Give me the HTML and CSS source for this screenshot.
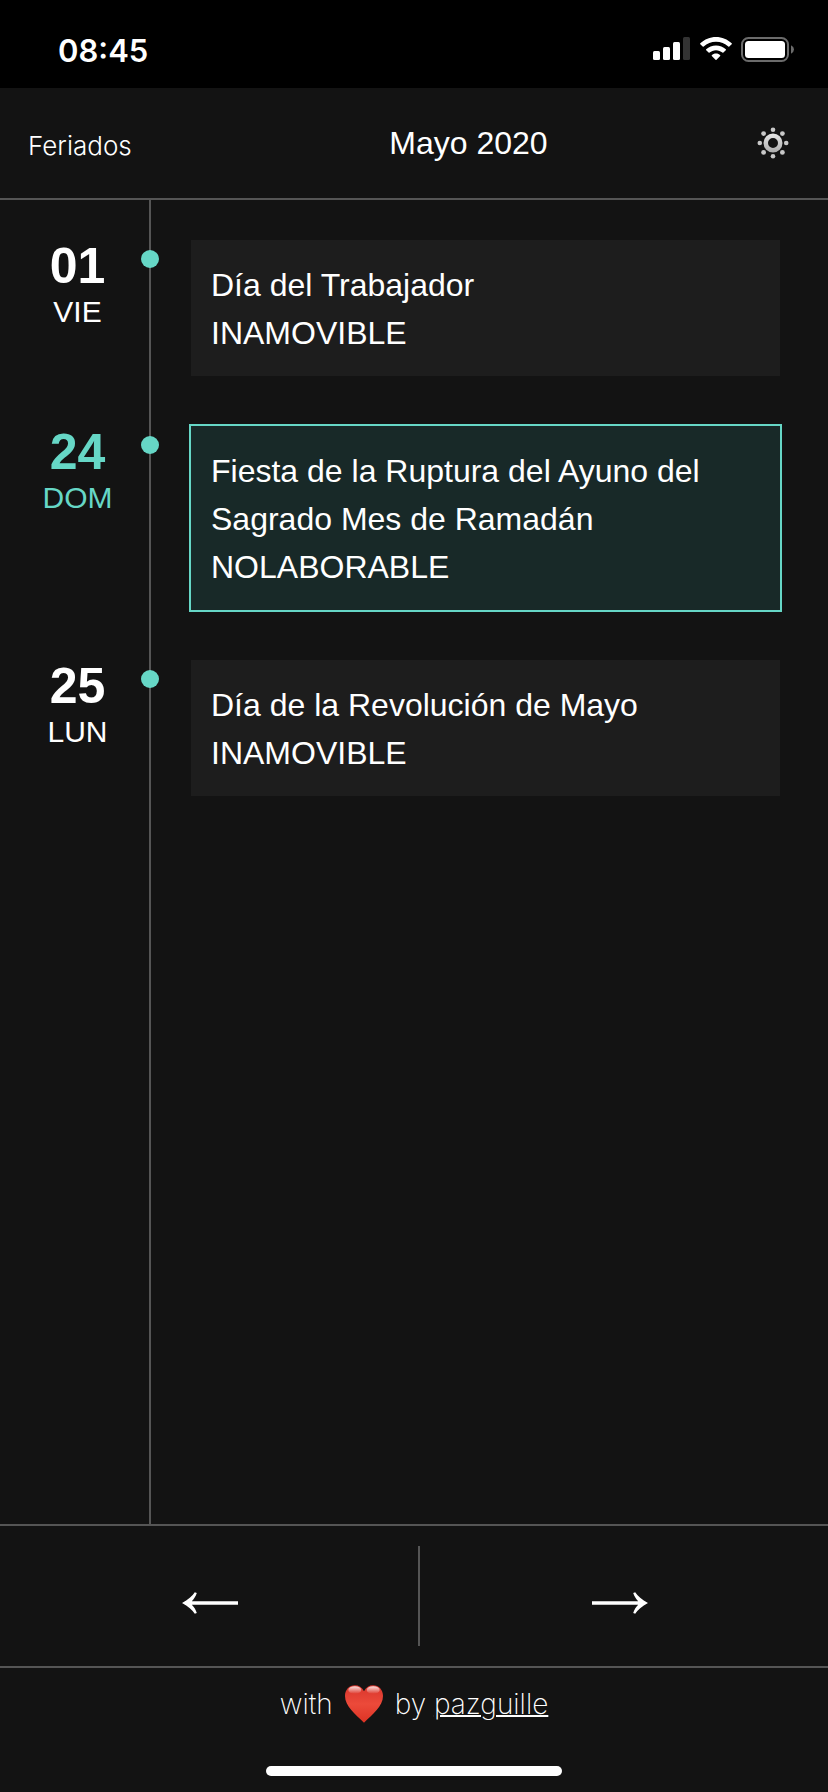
FILE: index.html
```html
<!DOCTYPE html>
<html lang="es">
<head>
<meta charset="utf-8">
<meta name="viewport" content="width=device-width, initial-scale=1">
<title>Feriados</title>
<link rel="stylesheet" href="styles.css">
</head>
<body>
<div class="app">
  <div class="status">
    <time class="status-time">08:45</time>
    <div class="status-icons">
      <svg width="38" height="24" viewBox="0 0 38 24" fill="#fff" aria-hidden="true">
        <rect x="0" y="14" width="7" height="9" rx="1.5"/>
        <rect x="10" y="10" width="7" height="13" rx="1.5"/>
        <rect x="20" y="5" width="7" height="18" rx="1.5"/>
        <rect x="30" y="0" width="7" height="23" rx="1.5" fill="#333"/>
      </svg>
      <svg width="32" height="24" viewBox="0 0 32 24" fill="#fff" aria-hidden="true">
        <path d="M16 0C22 0 27.500 2.300 31.700 6.300Q32.100 6.800 31.700 7.200L29.300 9.600Q28.800 10 28.300 9.600C25 6.600 20.700 4.800 16 4.800S7 6.600 3.700 9.600Q3.200 10 2.700 9.600L.3 7.200Q-.1 6.800 .3 6.300C4.500 2.300 10 0 16 0Z"/>
        <path d="M16 8.400C19.800 8.400 23.200 9.800 25.800 12.200Q26.300 12.700 25.800 13.200L23.400 15.600Q22.900 16 22.400 15.600C20.700 14.100 18.500 13.200 16 13.200S11.300 14.100 9.600 15.600Q9.100 16 8.600 15.600L6.200 13.200Q5.700 12.700 6.200 12.200C8.800 9.800 12.200 8.400 16 8.400Z"/>
        <path d="M16 16.600C17.700 16.600 19.200 17.200 20.200 18.200Q20.600 18.600 20.200 19.100L16.500 22.800Q16 23.200 15.500 22.800L11.800 19.100Q11.400 18.600 11.800 18.200C12.800 17.200 14.300 16.600 16 16.600Z"/>
      </svg>
      <svg width="54" height="26" viewBox="0 0 54 26" aria-hidden="true">
        <rect x="1" y="1" width="46" height="23" rx="6.500" fill="none" stroke="#6b6b6b" stroke-width="2"/>
        <rect x="4" y="4" width="40" height="17" rx="3.500" fill="#fff"/>
        <path d="M50 8.300Q53 9.800 53 12.500T50 16.700Z" fill="#6b6b6b"/>
      </svg>
    </div>
  </div>

  <header class="header">
    <span class="brand">Feriados</span>
    <h1 class="month">Mayo 2020</h1>
    <button class="theme" type="button" aria-label="Cambiar tema">
      <svg width="32" height="32" viewBox="0 0 32 32" aria-hidden="true">
        <defs>
          <linearGradient id="ring" x1="0" y1="0" x2="0" y2="1">
            <stop offset="0" stop-color="#e6e6e6"/>
            <stop offset="1" stop-color="#acacac"/>
          </linearGradient>
        </defs>
        <path fill="url(#ring)" fill-rule="evenodd" d="M16 6.500a9.500 9.500 0 1 1 0 19a9.500 9.500 0 0 1 0-19ZM16 11a5 5 0 1 0 0 10a5 5 0 0 0 0-10Z"/>
        <g fill="#c8c8c8">
          <circle cx="16" cy="2.800" r="2.300"/>
          <circle cx="25.400" cy="6.600" r="2.400"/>
          <circle cx="29.200" cy="16" r="2.300"/>
          <circle cx="25.400" cy="25.400" r="2.400"/>
          <circle cx="16" cy="29.200" r="2.300"/>
          <circle cx="6.600" cy="25.400" r="2.400"/>
          <circle cx="2.800" cy="16" r="2.300"/>
          <circle cx="6.600" cy="6.600" r="2.400"/>
        </g>
      </svg>
    </button>
  </header>

  <main class="timeline">
    <article class="holiday">
      <div class="date"><span class="day">01</span><span class="weekday">VIE</span></div>
      <span class="dot"></span>
      <div class="card"><p>Día del Trabajador</p><p>INAMOVIBLE</p></div>
    </article>
    <article class="holiday next">
      <div class="date"><span class="day">24</span><span class="weekday">DOM</span></div>
      <span class="dot"></span>
      <div class="card"><p>Fiesta de la Ruptura del Ayuno del Sagrado Mes de Ramadán</p><p>NOLABORABLE</p></div>
    </article>
    <article class="holiday">
      <div class="date"><span class="day">25</span><span class="weekday">LUN</span></div>
      <span class="dot"></span>
      <div class="card"><p>Día de la Revolución de Mayo</p><p>INAMOVIBLE</p></div>
    </article>
  </main>

  <nav class="pager">
    <button class="arrow" type="button" aria-label="Mes anterior">
      <svg width="56" height="24" viewBox="0 0 56 24" fill="#fff" aria-hidden="true">
        <path d="M0 12C6 8.800 10.500 5 12.800 1.200L14.800 2C13.600 5.300 12 8.200 9.800 10.200H56V13.800H9.800C12 15.800 13.600 18.700 14.800 22L12.800 22.800C10.500 19 6 15.200 0 12Z"/>
      </svg>
    </button>
    <span class="divider"></span>
    <button class="arrow" type="button" aria-label="Mes siguiente">
      <svg width="56" height="24" viewBox="0 0 56 24" fill="#fff" aria-hidden="true">
        <path d="M56 12C50 8.800 45.500 5 43.200 1.200L41.200 2C42.400 5.300 44 8.200 46.200 10.200H0V13.800H46.200C44 15.800 42.400 18.700 41.200 22L43.200 22.800C45.500 19 50 15.200 56 12Z"/>
      </svg>
    </button>
  </nav>

  <footer class="footer">
    <p class="credit">
      <span>with</span>
      <svg width="38" height="38" viewBox="0 0 38 38" role="img" aria-label="love">
        <defs>
          <linearGradient id="heart" x1="0" y1="0" x2="0" y2="1">
            <stop offset="0" stop-color="#d8352c"/>
            <stop offset=".5" stop-color="#ec4a3a"/>
            <stop offset="1" stop-color="#dd3324"/>
          </linearGradient>
          <linearGradient id="shine" x1="0" y1="0" x2="0" y2="1">
            <stop offset="0" stop-color="#fff" stop-opacity=".85"/>
            <stop offset="1" stop-color="#fff" stop-opacity="0"/>
          </linearGradient>
        </defs>
        <path fill="url(#heart)" d="M19 6.300C21.200 2.200 24.300 .3 28 .3C34 .3 38 4.900 38 11C38 21 27.500 29.500 19 37.700C10.500 29.500 0 21 0 11C0 4.900 4 .3 10 .3C13.700 .3 16.800 2.200 19 6.300Z"/>
        <ellipse cx="9.800" cy="5" rx="6.500" ry="3.800" fill="url(#shine)"/>
        <ellipse cx="28.200" cy="5" rx="6.500" ry="3.800" fill="url(#shine)"/>
      </svg>
      <span>by <a class="author" href="#">pazguille</a></span>
    </p>
    <div class="home"></div>
  </footer>
</div>
</body>
</html>
```

FILE: styles.css
```css
:root {
  --bg: #131313;
  --card: #1d1d1d;
  --line: #555;
  --accent: #66d7c6;
}

* {
  box-sizing: border-box;
  margin: 0;
}

body {
  background: var(--bg);
  color: #fff;
  font-family: "Liberation Sans", Helvetica, Arial, sans-serif;
  font-size: 32px;
}

button {
  padding: 0;
  border: 0;
  background: none;
  color: inherit;
  cursor: pointer;
}

svg {
  display: block;
}

.app {
  display: flex;
  flex-direction: column;
  min-height: 100vh;
}

.status {
  display: flex;
  justify-content: space-between;
  align-items: center;
  height: 88px;
  padding: 12px 33px 0 58px;
  background: #000;
}

.status-time {
  font-family: Inter, sans-serif;
  font-size: 31px;
  font-weight: 600;
}

.status-icons {
  display: flex;
  gap: 9px;
}

.header {
  display: grid;
  grid-template-columns: 152px 1fr 32px;
  align-items: center;
  height: 112px;
  padding: 0 39px 0 28px;
  border-bottom: 2px solid var(--line);
}

.brand {
  padding-top: 4px;
  font-family: Inter, sans-serif;
  font-size: 26px;
  font-weight: 300;
}

.month {
  font-size: 32px;
  font-weight: 400;
  text-align: center;
}

.timeline {
  position: relative;
  flex: 1;
  display: flex;
  flex-direction: column;
  gap: 50px;
  padding: 40px 48px 40px 0;
}

.timeline::before {
  content: "";
  position: absolute;
  top: 0;
  bottom: 0;
  left: 149px;
  width: 2px;
  background: var(--line);
}

.holiday {
  display: grid;
  grid-template-columns: 141px 18px 1fr;
  align-items: start;
}

.date {
  display: flex;
  flex-direction: column;
  align-items: center;
  padding: 2px 0 0 14px;
}

.day {
  font-size: 50px;
  font-weight: 700;
  line-height: 48px;
}

.weekday {
  font-size: 30px;
  line-height: 44px;
}

.dot {
  position: relative;
  height: 18px;
  margin-top: 10px;
  border-radius: 50%;
  background: var(--accent);
}

.card {
  margin-left: 32px;
  padding: 21px 20px 19px;
  background: var(--card);
  line-height: 48px;
}

.next .date {
  color: var(--accent);
}

.next .card {
  background: #182928;
  outline: 2px solid var(--accent);
}

.pager {
  display: grid;
  grid-template-columns: 1fr 2px 1fr;
  height: 144px;
  padding: 20px 0 20px 10px;
  border-top: 2px solid var(--line);
  border-bottom: 2px solid var(--line);
}

.arrow {
  display: flex;
  justify-content: center;
  align-items: center;
  padding: 14px 9px 0 0;
}

.divider {
  background: var(--line);
}

.footer {
  display: flex;
  flex-direction: column;
  align-items: center;
  justify-content: space-between;
  height: 124px;
  padding: 16px 0;
}

.credit {
  display: flex;
  align-items: center;
  gap: 12px;
  font-family: Inter, sans-serif;
  font-size: 28px;
  font-weight: 200;
  line-height: 40px;
}

.author {
  color: inherit;
  text-decoration-thickness: 2px;
}

.home {
  width: 296px;
  height: 10px;
  border-radius: 5px;
  background: #fff;
}
```
